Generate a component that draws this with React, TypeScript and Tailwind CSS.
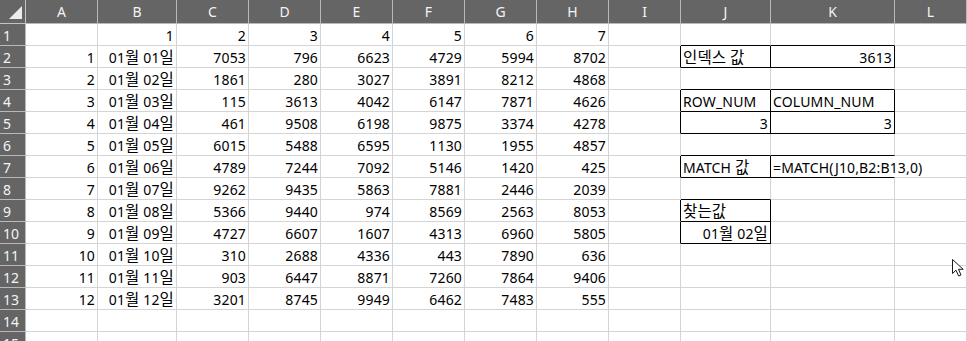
import React from 'react';

type Cell = { v: string; align: 'l' | 'r' };
type Box = { r1: number; c1: number; r2: number; c2: number; noRight?: boolean };

const colNames = ['A', 'B', 'C', 'D', 'E', 'F', 'G', 'H', 'I', 'J', 'K', 'L'];
const rowCount = 15;

const values = [
  [7053, 796, 6623, 4729, 5994, 8702],
  [1861, 280, 3027, 3891, 8212, 4868],
  [115, 3613, 4042, 6147, 7871, 4626],
  [461, 9508, 6198, 9875, 3374, 4278],
  [6015, 5488, 6595, 1130, 1955, 4857],
  [4789, 7244, 7092, 5146, 1420, 425],
  [9262, 9435, 5863, 7881, 2446, 2039],
  [5366, 9440, 974, 8569, 2563, 8053],
  [4727, 6607, 1607, 4313, 6960, 5805],
  [310, 2688, 4336, 443, 7890, 636],
  [903, 6447, 8871, 7260, 7864, 9406],
  [3201, 8745, 9949, 6462, 7483, 555],
];

const cells: Record<string, Cell> = {};
const put = (r: number, c: number, v: string | number, align: 'l' | 'r' = 'r') => {
  cells[`${r},${c}`] = { v: String(v), align };
};

// row 1 headers
for (let i = 1; i <= 7; i++) put(1, i, i);
values.forEach((row, i) => {
  const r = i + 2;
  const d = String(i + 1).padStart(2, '0');
  put(r, 0, i + 1);
  put(r, 1, `01월 ${d}일`);
  row.forEach((v, j) => put(r, j + 2, v));
});

// lookup area
put(2, 9, '인덱스 값', 'l');
put(2, 10, 3613);
put(4, 9, 'ROW_NUM', 'l');
put(4, 10, 'COLUMN_NUM', 'l');
put(5, 9, 3);
put(5, 10, 3);
put(7, 9, 'MATCH 값', 'l');
put(7, 10, '=MATCH(J10,B2:B13,0)', 'l');
put(9, 9, '찾는값', 'l');
put(10, 9, '01월 02일');

const boxes: Box[] = [
  { r1: 2, c1: 9, r2: 2, c2: 10 },
  { r1: 4, c1: 9, r2: 5, c2: 10 },
  { r1: 7, c1: 9, r2: 7, c2: 10, noRight: true },
  { r1: 9, c1: 9, r2: 10, c2: 9 },
];

const edges = (r: number, c: number) => {
  const e = { t: false, r: false, b: false, l: false };
  for (const b of boxes) {
    if (r >= b.r1 && r <= b.r2 && c >= b.c1 && c <= b.c2) {
      e.t = true;
      e.b = true;
      e.l = true;
      e.r = !(b.noRight && c === b.c2);
    }
  }
  return e;
};

const inNoRight = (r: number, c: number) =>
  boxes.some((b) => b.noRight && r >= b.r1 && r <= b.r2 && c === b.c2);

// hangul renders a bit larger than latin in the sheet font
const renderText = (text: string) =>
  text.split(/([\uAC00-\uD7A3]+)/).map((part, i) =>
    /[\uAC00-\uD7A3]/.test(part) ? (
      <span key={i} className="text-[15.5px]">
        {part}
      </span>
    ) : (
      <React.Fragment key={i}>{part}</React.Fragment>
    )
  );

const CornerIcon = () => (
  <svg width="26" height="24" viewBox="0 0 26 24" className="block">
    <polygon points="22,6 22,19 9,19" fill="#ececec" />
  </svg>
);

const Cursor = () => (
  <svg
    className="absolute left-[951px] top-[258px]"
    width="14"
    height="20"
    viewBox="0 0 14 20"
  >
    <path
      d="M1.5 1.5 L1.5 15.5 L5 12.2 L7.6 18 L10 17 L7.5 11.3 L12.2 11.3 Z"
      fill="#ffffff"
      stroke="#1a1a1a"
      strokeWidth="1"
      strokeLinejoin="round"
    />
  </svg>
);

const Sheet = () => {
  const rows = Array.from({ length: rowCount }, (_, i) => i + 1);

  return (
    <div className="relative h-[341px] w-[967px] overflow-hidden bg-white font-['Noto_Sans','Noto_Sans_CJK_KR',sans-serif] text-[14px] text-black">
      <div className="grid grid-cols-[26px_72px_79px_72px_72px_72px_72px_72px_72px_72px_90px_124px_72px]">
        {/* column header */}
        <div className="h-[24px] border-r border-b border-[#c3c3c3] bg-[#656565]">
          <CornerIcon />
        </div>
        {colNames.map((name) => (
          <div
            key={name}
            className="flex h-[24px] items-center justify-center border-r border-b border-[#b9b9b9] bg-[#656565] pb-[1px] leading-[19px] text-[#f4f4f4]"
          >
            {name}
          </div>
        ))}

        {rows.map((r) => (
          <React.Fragment key={r}>
            <div className="flex h-[22px] items-end border-r border-b border-[#b9b9b9] bg-[#656565] pl-[3px] leading-[19px] text-[#f4f4f4]">
              {r}
            </div>
            {colNames.map((_, c) => {
              const cell = cells[`${r},${c}`];
              const self = edges(r, c);
              const blackRight = self.r || edges(r, c + 1).l;
              const blackBottom = self.b || edges(r + 1, c).t;
              const hideRight = inNoRight(r, c) && !blackRight;
              return (
                <div
                  key={c}
                  className={`flex h-[22px] items-end whitespace-nowrap border-r border-b px-[2px] leading-[19px] ${
                    blackRight ? 'border-r-black' : hideRight ? 'border-r-white' : 'border-r-[#d4d4d4]'
                  } ${blackBottom ? 'border-b-black' : 'border-b-[#d4d4d4]'} ${
                    cell?.align === 'l' ? 'justify-start overflow-visible' : 'justify-end'
                  }`}
                >
                  {cell ? <span className="relative tracking-[0.15px]">{renderText(cell.v)}</span> : null}
                </div>
              );
            })}
          </React.Fragment>
        ))}
      </div>
      <Cursor />
    </div>
  );
};

export default function App() {
  return <Sheet />;
}
